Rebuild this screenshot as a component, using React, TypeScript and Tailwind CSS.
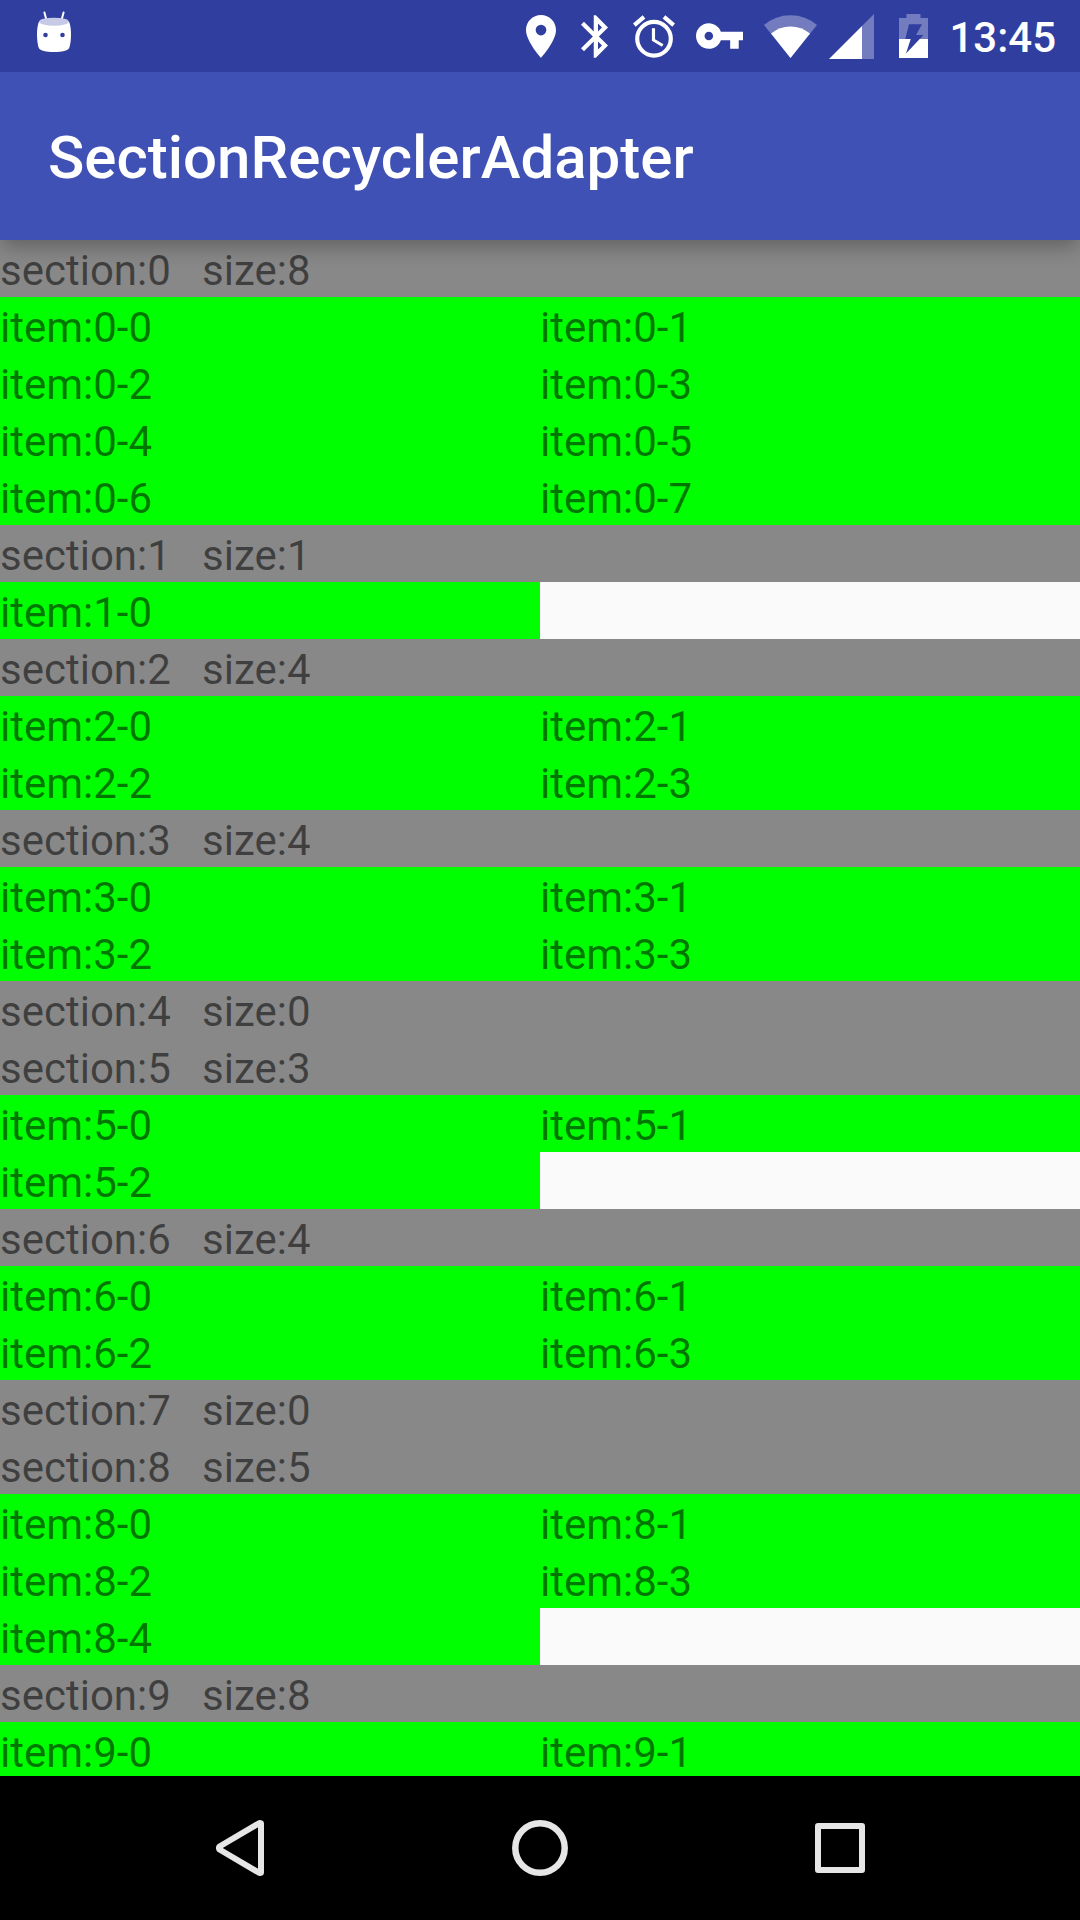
import React from "react";

type Section = { size: number; bound: number };

// `bound` is the number of item cells currently attached to the list.
const sections: Section[] = [
  { size: 8, bound: 8 },
  { size: 1, bound: 1 },
  { size: 4, bound: 4 },
  { size: 4, bound: 4 },
  { size: 0, bound: 0 },
  { size: 3, bound: 3 },
  { size: 4, bound: 4 },
  { size: 0, bound: 0 },
  { size: 5, bound: 5 },
  { size: 8, bound: 2 },
];

function DroidIcon() {
  return (
    <svg className="h-[42px] w-[34px]" viewBox="37 12 34 42" aria-label="Android">
      <path d="M44.4 13.4l2.2 8M63.6 13.4l-2.2 8" stroke="#fff" strokeWidth="2" strokeLinecap="round" />
      <path
        d="M39 22.500C37.300 27 37 31 37 35.500C37 41 37.600 45.500 38.800 49C40.200 51.800 46 53 54 53S67.800 51.800 69.200 49C70.400 45.500 71 41 71 35.500C71 31 70.700 27 69 22.500z"
        fill="#fff"
      />
      <ellipse cx="54" cy="22.700" rx="14.800" ry="4" fill="#c7cae6" />
      <circle cx="45.500" cy="36" r="2.300" fill="#303f9f" />
      <circle cx="62.500" cy="36" r="2.300" fill="#303f9f" />
    </svg>
  );
}

function PlaceIcon() {
  return (
    <svg className="mr-[25px] h-[43px] w-[30px]" viewBox="5 2 14 20" fill="#fff" aria-label="Location">
      <path d="M12 2C8.130 2 5 5.130 5 9c0 5.250 7 13 7 13s7-7.750 7-13c0-3.870-3.130-7-7-7zm0 9.500a2.500 2.500 0 1 1 0-5 2.500 2.500 0 0 1 0 5z" />
    </svg>
  );
}

function BluetoothIcon() {
  return (
    <svg className="mr-[25px] h-[43px] w-[27px]" viewBox="5 2 12.710 20" fill="#fff" aria-label="Bluetooth">
      <path d="M17.710 7.710L12 2h-1v7.590L6.410 5 5 6.410 10.590 12 5 17.590 6.410 19 11 14.410V22h1l5.710-5.710-4.300-4.290 4.300-4.290zM13 5.830l1.880 1.880L13 9.590V5.830zm1.880 10.460L13 18.170v-3.760l1.880 1.880z" />
    </svg>
  );
}

function AlarmIcon() {
  return (
    <svg className="mr-[21px] h-[43px] w-[42px]" viewBox="2 1.860 20 20.140" fill="#fff" aria-label="Alarm">
      <path d="M22 5.720l-4.600-3.860-1.290 1.530 4.600 3.860L22 5.720zM7.880 3.390L6.600 1.860 2 5.710l1.290 1.530 4.590-3.850zM12.500 8H11v6l4.750 2.850.750-1.230-4-2.370V8zM12 4a9 9 0 1 0 0 18 9 9 0 0 0 0-18zm0 16a7 7 0 1 1 0-14 7 7 0 0 1 0 14z" />
    </svg>
  );
}

function KeyIcon() {
  return (
    <svg className="mr-[21px] h-[26px] w-[47px]" viewBox="1 6 22 12" fill="#fff" aria-label="VPN">
      <path d="M12.650 10C11.830 7.670 9.610 6 7 6c-3.310 0-6 2.690-6 6s2.690 6 6 6c2.610 0 4.830-1.670 5.650-4H17v4h4v-4h2v-4H12.650zM7 14a2 2 0 1 1 0-4 2 2 0 0 1 0 4z" />
    </svg>
  );
}

function WifiIcon() {
  return (
    <svg className="mr-3 h-[43px] w-[53px]" viewBox="764 14 53 43" fill="#fff" aria-label="Wi-Fi">
      <path d="M790.500 57L764 24Q775.500 14.200 790.500 14.200T817 24z" fillOpacity=".32" />
      <path d="M790.500 57L771 32.500Q779.500 25.500 790.500 25.500T810 32.500z" />
    </svg>
  );
}

function SignalIcon() {
  return (
    <svg className="mr-[25px] h-[45px] w-[45px]" viewBox="829 14 45 45" fill="#fff" aria-label="Signal">
      <path d="M862 59V26L874 14V59z" fillOpacity=".32" />
      <path d="M829 59L862 26V59z" />
    </svg>
  );
}

function BatteryIcon() {
  return (
    <svg className="mr-[21px] h-[44px] w-[29px]" viewBox="899 14 29 44" fill="#fff" aria-label="Battery charging">
      <path d="M899 39V18h7.500V14h14v4H928v21z" fillOpacity=".32" />
      <path d="M899 39h29v19h-29z" />
      <path d="M909 24.300h13L916 35h7.500L906 53.500l4.700-14.500h-5.400z" fill="#303f9f" />
    </svg>
  );
}

function StatusBar() {
  return (
    <div className="relative z-20 flex h-[72px] shrink-0 items-center justify-between bg-[#303f9f] pr-6 pl-[37px] text-white">
      <div className="pb-2">
        <DroidIcon />
      </div>
      <div className="flex items-center">
        <PlaceIcon />
        <BluetoothIcon />
        <AlarmIcon />
        <KeyIcon />
        <WifiIcon />
        <SignalIcon />
        <BatteryIcon />
        <time className="pt-1 text-[42px] leading-[48px] font-medium">13:45</time>
      </div>
    </div>
  );
}

function SectionBlock({ index, section }: { index: number; section: Section }) {
  return (
    <section>
      <h2 className="bg-[#888888] pt-1 leading-[53px] whitespace-pre">{`section:${index}   size:${section.size}`}</h2>
      <ul className="grid grid-cols-2">
        {Array.from({ length: section.bound }, (_, i) => (
          <li key={i} className="bg-[#00ff00] pt-1 leading-[53px]">{`item:${index}-${i}`}</li>
        ))}
      </ul>
    </section>
  );
}

function NavBar() {
  return (
    <nav className="flex h-36 shrink-0 justify-center bg-black px-[90px]">
      <button type="button" aria-label="Back" className="flex flex-1 items-center justify-center">
        <svg className="h-14 w-12" viewBox="0 0 48 56" fill="none" stroke="#e6e6e6" strokeWidth="6" strokeLinejoin="round">
          <path d="M45 3.200V52.800L43.500 53L3.500 29.500Q2.500 28 3.500 26.500L43.500 3z" />
        </svg>
      </button>
      <button type="button" aria-label="Home" className="flex flex-1 items-center justify-center">
        <svg className="size-14" viewBox="0 0 56 56" fill="none" stroke="#e6e6e6" strokeWidth="6.500">
          <circle cx="28" cy="28" r="24.700" />
        </svg>
      </button>
      <button type="button" aria-label="Overview" className="flex flex-1 items-center justify-center">
        <svg className="size-[50px]" viewBox="0 0 50 50" fill="none" stroke="#e6e6e6" strokeWidth="6" strokeLinejoin="round">
          <path d="M3 3H47V47H3z" />
        </svg>
      </button>
    </nav>
  );
}

export default function App() {
  return (
    <div className="flex h-screen flex-col bg-[#fafafa] font-[Roboto,sans-serif]">
      <StatusBar />
      <header className="relative z-10 flex h-[168px] shrink-0 items-center bg-[#3f51b5] px-12 pt-1 shadow-[0_8px_20px_-2px_rgba(0,0,0,0.3)]">
        <h1 className="text-[60px] leading-[72px] font-medium text-white">SectionRecyclerAdapter</h1>
      </header>
      <main className="min-h-0 flex-1 overflow-hidden text-[42px] text-black/54">
        {sections.map((section, i) => (
          <SectionBlock key={i} index={i} section={section} />
        ))}
      </main>
      <NavBar />
    </div>
  );
}
